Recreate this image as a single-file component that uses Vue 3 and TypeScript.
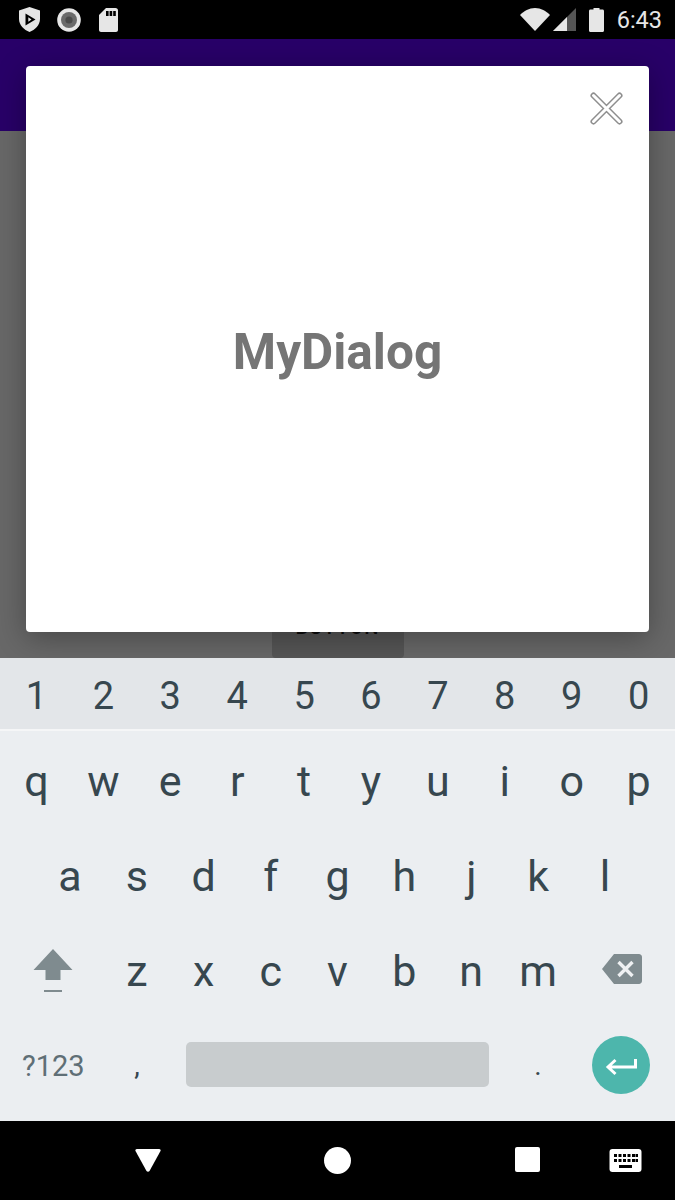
<script setup lang="ts">
const digits = ['1', '2', '3', '4', '5', '6', '7', '8', '9', '0']
const topRow = ['q', 'w', 'e', 'r', 't', 'y', 'u', 'i', 'o', 'p']
const homeRow = ['a', 's', 'd', 'f', 'g', 'h', 'j', 'k', 'l']
const lowerRow = ['z', 'x', 'c', 'v', 'b', 'n', 'm']
</script>

<template>
  <div class="phone">
    <header class="status-bar">
      <div class="status-left">
        <svg width="21" height="25" viewBox="0 0 21 25">
          <path d="M10.5 0 L21 3.5 V12 C21 18 16 23 10.5 25 C5 23 0 18 0 12 V3.5 Z" fill="#e6e6e6" />
          <path d="M6.5 6.5 L16.5 12.5 L6.5 18.5 Z" fill="#000" />
          <path d="M9.3 10.2 L12.5 12.5 L9.3 14.8 Z" fill="#e6e6e6" />
        </svg>
        <svg width="24" height="24" viewBox="0 0 24 24">
          <circle cx="12" cy="12" r="11.8" fill="#e6e6e6" />
          <circle cx="12" cy="12" r="8" fill="#6a6a6a" />
          <circle cx="12" cy="12" r="3.6" fill="#4a4a4a" />
        </svg>
        <svg class="sd-card" width="19" height="24" viewBox="0 0 19 24">
          <path d="M7 0 H16.5 C18 0 19 1 19 2.5 V22 C19 23.2 18 24 17 24 H2 C1 24 0 23.2 0 22 V7 Z" fill="#e6e6e6" />
          <rect x="7" y="3" width="2.6" height="5" fill="#000" />
          <rect x="10.6" y="3" width="2.6" height="5" fill="#000" />
          <rect x="14.2" y="3" width="2.6" height="5" fill="#000" />
        </svg>
      </div>
      <div class="status-right">
        <svg class="wifi" width="30" height="24" viewBox="0 0 30 24">
          <path d="M0 7 C4 3 9 0 15 0 C21 0 26 3 30 7 L15 23 Z" fill="#e6e6e6" />
        </svg>
        <svg class="signal" width="23" height="23" viewBox="0 0 23 23">
          <path d="M23 0 V23 H0 Z" fill="#555" />
          <path d="M14 9 V23 H0 Z" fill="#e6e6e6" />
        </svg>
        <svg class="battery" width="15" height="24" viewBox="0 0 15 24">
          <path d="M4.5 1.5 V0 H10.5 V1.5 H13.5 C14.4 1.5 15 2.1 15 3 V22.5 C15 23.4 14.4 24 13.5 24 H1.5 C0.6 24 0 23.4 0 22.5 V3 C0 2.1 0.6 1.5 1.5 1.5 Z" fill="#e6e6e6" />
        </svg>
        <span class="clock">6:43</span>
      </div>
    </header>

    <div class="app-bar"></div>

    <main class="content">
      <div class="button"><span>BUTTON</span></div>
    </main>

    <section class="keyboard">
      <div class="row number-row">
        <span v-for="d in digits" :key="d" class="key digit">{{ d }}</span>
      </div>
      <div class="letters">
        <div class="row">
          <span v-for="k in topRow" :key="k" class="key letter">{{ k }}</span>
        </div>
        <div class="row home-row">
          <span v-for="k in homeRow" :key="k" class="key letter">{{ k }}</span>
        </div>
        <div class="row">
          <span class="wide-key">
            <svg class="shift" width="40" height="44" viewBox="0 0 40 44">
              <path d="M20 0 L39.5 21 H27.5 V31 H12.5 V21 H0.5 Z" fill="#7f8b8f" />
              <rect x="11" y="41" width="18" height="2" fill="#7f8b8f" />
            </svg>
          </span>
          <span v-for="k in lowerRow" :key="k" class="key letter">{{ k }}</span>
          <span class="wide-key">
            <svg class="backspace" width="40" height="30" viewBox="0 0 40 30">
              <path d="M12 0 H37 C38.6 0 40 1.4 40 3 V27 C40 28.6 38.6 30 37 30 H12 L0 15 Z" fill="#7f8b8f" />
              <path d="M16.5 8 L30.5 22 M30.5 8 L16.5 22" stroke="#eef0f2" stroke-width="3.4" fill="none" />
            </svg>
          </span>
        </div>
        <div class="row bottom-row">
          <span class="wide-key symbols">?123</span>
          <span class="key punct">,</span>
          <span class="space-cell"><span class="space-bar"></span></span>
          <span class="key punct">.</span>
          <span class="wide-key">
            <span class="enter">
              <svg width="32" height="22" viewBox="0 0 32 22">
                <path d="M30.5 5 V13 H4 M10.5 6 L3 13 L10.5 20" stroke="#fff" stroke-width="3" fill="none" />
              </svg>
            </span>
          </span>
        </div>
      </div>
    </section>

    <footer class="nav-bar">
      <svg class="nav-back" width="26" height="24" viewBox="0 0 26 24">
        <path d="M2 1 H24 C25.5 1 26 2 25.5 3 L14.5 23 C13.8 24 12.2 24 11.5 23 L0.5 3 C0 2 0.5 1 2 1 Z" fill="#fff" />
      </svg>
      <svg class="nav-home" width="27" height="27" viewBox="0 0 27 27">
        <circle cx="13.5" cy="13.5" r="13.5" fill="#fff" />
      </svg>
      <svg class="nav-recents" width="25" height="25" viewBox="0 0 25 25">
        <rect width="25" height="25" rx="2" fill="#fff" />
      </svg>
      <svg class="nav-keyboard" width="33" height="24" viewBox="0 0 32 24">
        <rect width="32" height="23" rx="3" fill="#fff" />
        <g fill="#000">
          <rect x="4.5" y="5" width="3" height="3" /><rect x="9" y="5" width="3" height="3" />
          <rect x="13.5" y="5" width="3" height="3" /><rect x="18" y="5" width="3" height="3" />
          <rect x="22.5" y="5" width="3" height="3" /><rect x="26" y="5" width="2.5" height="3" />
          <rect x="4.5" y="10" width="3" height="3" /><rect x="9" y="10" width="3" height="3" />
          <rect x="13.5" y="10" width="3" height="3" /><rect x="18" y="10" width="3" height="3" />
          <rect x="22.5" y="10" width="3" height="3" /><rect x="26" y="10" width="2.5" height="3" />
          <rect x="9.5" y="16" width="13" height="3" />
        </g>
      </svg>
    </footer>

    <div class="dialog">
      <button class="close" aria-label="Close">
        <svg width="36" height="36" viewBox="0 0 36 36">
          <path d="M5.5 5.5 L31.5 31.5 M31.5 5.5 L5.5 31.5" stroke="#8e8e8e" stroke-width="6" stroke-linecap="round" fill="none" />
          <path d="M5.5 5.5 L31.5 31.5 M31.5 5.5 L5.5 31.5" stroke="#fff" stroke-width="3" stroke-linecap="round" fill="none" />
        </svg>
      </button>
      <h1 class="title">MyDialog</h1>
    </div>
  </div>
</template>

<style scoped>
.phone {
  position: relative;
  width: 675px;
  height: 1200px;
  display: flex;
  flex-direction: column;
  overflow: hidden;
  font-family: Roboto, "Liberation Sans", sans-serif;
}

.status-bar {
  position: relative;
  z-index: 2;
  height: 39px;
  background: #000;
  display: flex;
  align-items: center;
  justify-content: space-between;
  padding: 0 13px 0 19px;
  box-sizing: border-box;
}

.status-left {
  display: flex;
  align-items: center;
  gap: 17px;
}

.sd-card {
  margin-left: 1px;
}

.status-right {
  display: flex;
  align-items: center;
}

.wifi {
  margin-right: 3px;
}

.signal {
  margin-right: 13px;
}

.battery {
  margin-right: 13px;
}

.clock {
  color: #e6e6e6;
  font-size: 23.5px;
  line-height: 26px;
}

.app-bar {
  height: 92px;
  background: #280068;
}

.content {
  flex: 1;
  background: #686868;
  display: flex;
  justify-content: center;
  align-items: flex-end;
}

.button {
  width: 132px;
  height: 84px;
  background: #565656;
  border-radius: 4px;
  display: flex;
  align-items: flex-end;
  justify-content: center;
  padding-bottom: 19px;
  box-sizing: border-box;
  color: #0c0c0c;
  font-size: 20px;
  font-weight: 500;
  letter-spacing: 1px;
  line-height: 23px;
}

.keyboard {
  position: relative;
  z-index: 2;
  height: 463px;
  background: #ebeef1;
  color: #37474f;
}

.row {
  display: flex;
  align-items: center;
  padding: 0 3px;
}

.number-row {
  height: 67px;
  padding-top: 4px;
  background: #e3e6e9;
  border-bottom: 2px solid #f5f6f7;
}

.letters {
  display: flex;
  flex-direction: column;
  padding-top: 2px;
}

.letters .row {
  height: 95px;
}

.letters .home-row {
  padding: 0 36.5px;
}

.key {
  flex: 1;
  text-align: center;
}

.digit {
  font-size: 38px;
  line-height: 44px;
}

.letter {
  font-size: 43px;
  line-height: 50px;
}

.wide-key {
  width: 100.5px;
  flex: none;
  display: flex;
  align-items: center;
  justify-content: center;
}

.shift {
  margin-top: 1px;
}

.backspace {
  margin-top: -4px;
}

.symbols {
  font-size: 29px;
  color: #5f6f76;
  line-height: 32px;
}

.bottom-row .punct {
  flex: none;
  width: 67px;
  font-size: 28px;
  line-height: 32px;
}

.space-cell {
  flex: 1;
  display: flex;
  justify-content: center;
}

.space-bar {
  width: 303px;
  height: 45px;
  margin-top: -2px;
  border-radius: 5px;
  background: #c8ccce;
}

.enter {
  width: 58px;
  height: 58px;
  margin: -2px 1px 0 0;
  border-radius: 50%;
  background: #4db6ac;
  display: flex;
  align-items: center;
  justify-content: center;
}

.nav-bar {
  position: relative;
  z-index: 2;
  height: 79px;
  background: #000;
}

.nav-bar svg {
  position: absolute;
}

.nav-back {
  left: 135px;
  top: 27px;
}

.nav-home {
  left: 324px;
  top: 26px;
}

.nav-recents {
  left: 515px;
  top: 26px;
}

.nav-keyboard {
  left: 609px;
  top: 28px;
}

.dialog {
  position: absolute;
  z-index: 1;
  left: 26px;
  top: 66px;
  width: 623px;
  height: 566px;
  background: #fff;
  border-radius: 4px;
  box-shadow: 0 6px 30px rgba(0, 0, 0, 0.32);
  display: flex;
  align-items: center;
  justify-content: center;
}

.close {
  position: absolute;
  top: 24px;
  right: 25px;
  padding: 0;
  border: 0;
  background: none;
  width: 36px;
  height: 36px;
}

.title {
  margin: 0;
  font-size: 49.5px;
  font-weight: 700;
  color: #757575;
  line-height: 56px;
  transform: translateY(3px);
}
</style>
